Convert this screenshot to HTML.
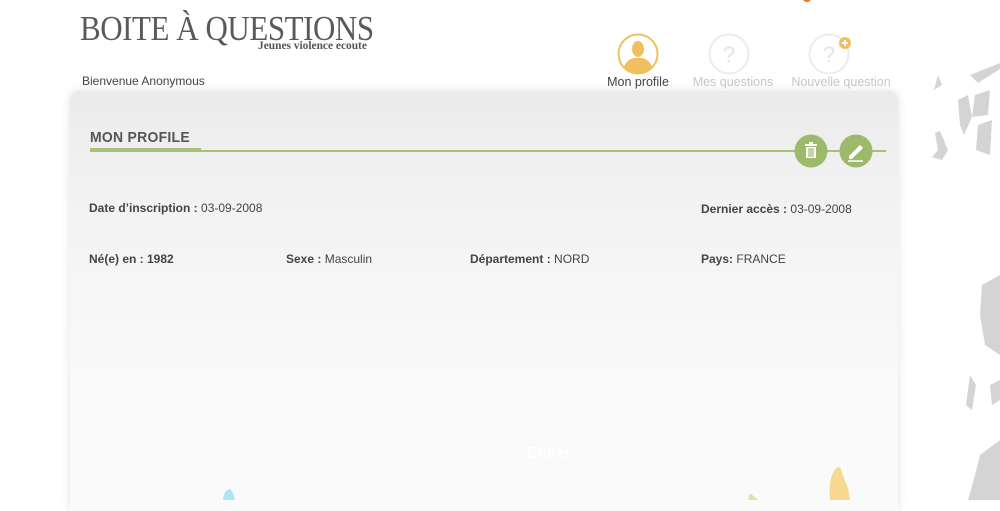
<!DOCTYPE html>
<html><head><meta charset="utf-8"><style>
body{margin:0;width:1000px;height:500px;overflow:hidden;background:#fff;font-family:"Liberation Sans",sans-serif;position:relative}
.a{position:absolute;white-space:nowrap}
.logo{left:80px;top:9px;font-family:"Liberation Serif",serif;font-size:35px;color:#5a5a5a;transform-origin:0 0;transform:scaleX(0.885);letter-spacing:-0.5px}
.sub{left:258px;top:38px;font-family:"Liberation Serif",serif;font-size:12px;font-weight:bold;color:#555;transform-origin:0 0;transform:scaleX(0.95)}
.panel{position:absolute;left:70px;top:91px;width:828px;height:420px;border-radius:9px 9px 0 0;background:linear-gradient(#ebebeb 0,#f3f3f3 120px,#fafafa 300px);box-shadow:0 0 10px rgba(0,0,0,0.12)}
.t{font-size:12px;color:#444}
.nav{font-size:12.5px;text-align:center}
</style></head><body>
<div class="a logo">BOITE À QUESTIONS</div>
<div class="a sub">Jeunes violence ecoute</div>
<div class="a" style="left:82px;top:74px;font-size:12px;color:#444">Bienvenue Anonymous</div>
<div style="position:absolute;left:803px;top:-5px;width:8px;height:7px;border-radius:50%;background:#f07020"></div>

<svg class="a" style="left:600px;top:30px" width="300" height="50">
<circle cx="38" cy="24" r="19.5" fill="none" stroke="#f0c060" stroke-width="2"/>
<clipPath id="c"><circle cx="38" cy="24" r="19"/></clipPath>
<g clip-path="url(#c)" fill="#f0c060"><ellipse cx="38" cy="19" rx="6" ry="8"/><path d="M22 44 Q24 30 34 28 L42 28 Q52 30 54 44Z"/></g>
<circle cx="129" cy="24" r="19.5" fill="none" stroke="#ececec" stroke-width="2"/>
<text x="129" y="32" font-size="22" fill="#e4e4e4" text-anchor="middle" font-family="Liberation Sans">?</text>
<circle cx="229" cy="24" r="19.5" fill="none" stroke="#ececec" stroke-width="2"/>
<text x="229" y="32" font-size="22" fill="#e4e4e4" text-anchor="middle" font-family="Liberation Sans">?</text>
<circle cx="245" cy="13" r="6" fill="#f0c060"/><path d="M242 13h6M245 10v6" stroke="#fff" stroke-width="2"/>
</svg>
<div class="a nav" style="left:598px;top:75px;width:80px;color:#444">Mon profile</div>
<div class="a nav" style="left:688px;top:75px;width:90px;color:#c8c8c8">Mes questions</div>
<div class="a nav" style="left:786px;top:75px;width:110px;color:#c8c8c8">Nouvelle question</div>

<svg class="a" style="left:920px;top:55px" width="80" height="445">
<g fill="#d4d4d4"><path d="M50 20 L80 8 L80 14 L58 28Z"/><path d="M38 45 L48 40 L52 62 L44 80 L40 70Z"/><path d="M15 78 L20 76 L28 95 L22 105 L12 102 L18 95Z"/><path d="M55 40 L70 35 L68 60 L52 62Z"/><path d="M58 70 L72 65 L70 100 L56 95Z"/><path d="M18 20 L22 30 L14 35Z"/>
<path d="M62 230 L80 220 L80 300 L65 290 L60 260Z"/><path d="M50 320 L56 330 L52 355 L46 350Z"/><path d="M70 330 L80 325 L80 345 L72 350Z"/><path d="M60 400 L80 385 L80 445 L48 445 L55 420Z"/></g>
</svg>

<div class="panel"></div>
<div class="a" style="left:90px;top:129px;font-size:15px;color:#555;letter-spacing:0.3px;font-weight:bold;transform-origin:0 0;transform:scaleX(0.93)">MON PROFILE</div>
<div class="a" style="left:90px;top:150px;width:796px;height:2px;background:#a9c07b"></div>
<div class="a" style="left:90px;top:148px;width:111px;height:4px;background:#a9c07b"></div>
<svg class="a" style="left:794px;top:134px" width="82" height="34">
<circle cx="17" cy="17" r="16.5" fill="#9dba6b"/>
<g fill="#fff"><rect x="11" y="10" width="12" height="2"/><rect x="15" y="8" width="4" height="2"/><path d="M12 13h10v11h-10z"/></g>
<g stroke="#9dba6b" stroke-width="1.2"><path d="M15 14v9M17 14v9M19 14v9"/></g>
<circle cx="62" cy="17" r="16.5" fill="#9dba6b"/>
<path d="M55 22 L66 11 L69 14 L58 25 L55 25Z" fill="#fff"/><path d="M54 27h15" stroke="#fff" stroke-width="1.5"/>
</svg>
<div class="a t" style="left:89px;top:201px"><b>Date d’inscription :</b> 03-09-2008</div>
<div class="a t" style="left:701px;top:202px"><b>Dernier accès :</b> 03-09-2008</div>
<div class="a t" style="left:89px;top:252px"><b>Né(e) en : 1982</b></div>
<div class="a t" style="left:286px;top:252px"><b>Sexe :</b> Masculin</div>
<div class="a t" style="left:470px;top:252px"><b>Département :</b> NORD</div>
<div class="a t" style="left:701px;top:252px"><b>Pays:</b> FRANCE</div>
<div class="a" style="left:527px;top:445px;font-size:16px;color:#fff">Entrer</div>
<svg class="a" style="left:215px;top:480px" width="30" height="20"><path d="M8 20 Q9 10 15 9 L18 13 L20 20Z" fill="#b0e4f4"/></svg>
<svg class="a" style="left:740px;top:460px" width="120" height="40"><path d="M90 40 Q88 18 96 8 L100 7 L104 18 L108 28 L110 40Z" fill="#f8d890"/><path d="M8 40 L10 33 L18 40Z" fill="#d8e4b0"/></svg>
</body></html>
